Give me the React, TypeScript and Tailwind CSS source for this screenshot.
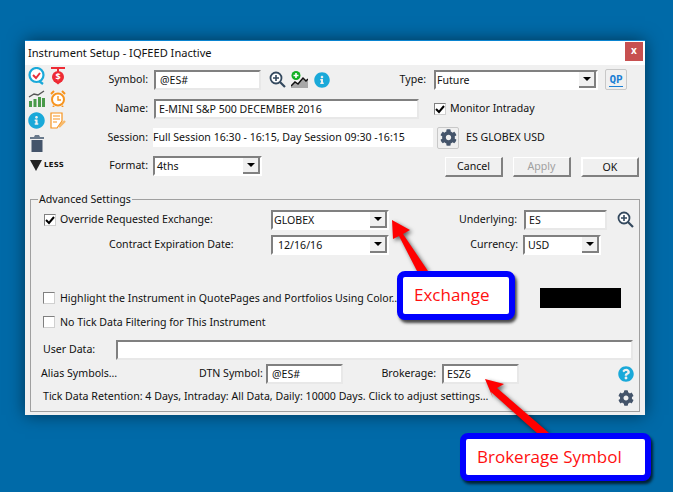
import React from "react";
import { FaCog, FaInfoCircle, FaQuestionCircle } from "react-icons/fa";

const Field = ({ className, text }: { className: string; text?: string }) => (
  <div
    className={`h-[20px] shrink-0 bg-white border-2 border-t-[#808080] border-l-[#808080] border-r-[#e8e8e8] border-b-[#e8e8e8] leading-[17px] ${className}`}
  >
    {text}
  </div>
);

const Select = ({ className, text, textClass = "pl-[2px]" }: { className: string; text: string; textClass?: string }) => (
  <div
    className={`h-[20px] shrink-0 flex bg-white border-2 border-t-[#808080] border-l-[#808080] border-r-white border-b-white ${className}`}
  >
    <span className={`flex-1 leading-[17px] ${textClass}`}>{text}</span>
    <span className="w-[17px] flex items-center justify-center bg-[#f0f0f0] border-r-2 border-b-2 border-[#808080]">
      <span className="w-0 h-0 border-l-[4px] border-r-[4px] border-t-[4px] border-l-transparent border-r-transparent border-t-black" />
    </span>
  </div>
);

const Check = ({ on = false }: { on?: boolean }) => (
  <span className="w-[12px] h-[12px] shrink-0 bg-white border border-t-[#808080] border-l-[#808080] border-r-[#d0d0d0] border-b-[#d0d0d0] flex items-center justify-center">
    {on && (
      <svg width="10" height="10" viewBox="0 0 10 10">
        <path d="M1 5 L4 8 L9 2" fill="none" stroke="#000" strokeWidth="2" />
      </svg>
    )}
  </span>
);

const Btn = ({ text, className = "" }: { text: string; className?: string }) => (
  <div
    className={`w-[58px] h-[20px] shrink-0 text-center leading-[17px] bg-[#f0f0f0] border border-t-white border-l-white border-r-2 border-b-2 border-r-[#808080] border-b-[#808080] ${className}`}
  >
    {text}
  </div>
);

const Magnifier = ({ className = "" }: { className?: string }) => (
  <svg width="17" height="17" viewBox="0 0 17 17" className={`shrink-0 ${className}`}>
    <circle cx="7" cy="7" r="5.5" fill="#fff" stroke="#34495e" strokeWidth="1.8" />
    <path d="M11 11 L16 16" stroke="#34495e" strokeWidth="2.2" />
    <path d="M4 7 H10 M7 4 V10" stroke="#34495e" strokeWidth="1.6" />
  </svg>
);

const SideIcons = () => (
  <div className="w-[68px] shrink-0 pl-[3px] pt-[2px]">
    <div className="grid grid-cols-[22px_16px] auto-rows-[22.5px]">
      <svg width="17" height="18" viewBox="0 0 17 18">
        <circle cx="8.5" cy="8" r="7" fill="#fff" stroke="#1aa9d9" strokeWidth="2.2" />
        <path d="M5 8 L8 11 L12 6" fill="none" stroke="#e8303a" strokeWidth="2" />
        <path d="M11 14 L15 17" stroke="#1aa9d9" strokeWidth="2.2" />
      </svg>
      <svg width="16" height="18" viewBox="0 0 16 18">
        <path d="M1 1 H15 M8 1 V5" stroke="#ee2b35" strokeWidth="2" />
        <circle cx="8" cy="10" r="6" fill="#ee2b35" />
        <path d="M8 17.5 L5 15 H11 Z" fill="#ee2b35" />
        <text x="8" y="13" fontSize="9" fontWeight="700" fill="#fff" textAnchor="middle">$</text>
      </svg>
      <svg width="17" height="17" viewBox="0 0 17 17">
        <path d="M1 7 L6 4 L10 5 L16 1" fill="none" stroke="#555" strokeWidth="1.4" />
        <path d="M1 11 h3 v6 h-3z M5.500 9 h3 v8 h-3z M10 7 h3 v10 h-3z M14 8 h3 v9 h-3z" fill="#4a9a4a" />
      </svg>
      <svg width="16" height="17" viewBox="0 0 16 17">
        <circle cx="8" cy="9.500" r="6" fill="#fff" stroke="#f7941e" strokeWidth="2" />
        <path d="M8 6 V10 H11" fill="none" stroke="#f7941e" strokeWidth="1.4" />
        <path d="M1 4 L4 1 M15 4 L12 1 M4 16 L3 17 M12 16 L13 17" stroke="#f7941e" strokeWidth="2" />
      </svg>
      <FaInfoCircle size={17} color="#1aa9d9" />
      <svg width="16" height="17" viewBox="0 0 16 17">
        <path d="M1 1 H12 V9 L7 16 H1 Z" fill="#fff" stroke="#f7941e" strokeWidth="1.2" />
        <path d="M3 4 H10 M3 7 H10 M3 10 H7" stroke="#f7941e" strokeWidth="1.2" />
        <path d="M9 15 L15 9" stroke="#f7b96a" strokeWidth="2.4" />
      </svg>
    </div>
    <svg width="14" height="18" viewBox="0 0 14 18" className="ml-[2px] -mt-[1px]">
      <path d="M0 3 H14 V5 H0 Z M4 3 L5 1 H9 L10 3 Z" fill="#6a7a8c" />
      <path d="M1.500 6 H12.500 V18 H1.500 Z" fill="#44546a" />
    </svg>
    <div className="flex items-center ml-[2px] mt-[8px] h-[12px]">
      <span className="w-0 h-0 border-l-[6px] border-r-[6px] border-t-[11px] border-l-transparent border-r-transparent border-t-[#222]" />
      <span className="ml-[2px] text-[7px] font-bold leading-none tracking-[0.3px] font-['DejaVu_Sans',sans-serif]">LESS</span>
    </div>
  </div>
);

export default function App() {
  return (
    <div className="relative w-[673px] h-[492px] overflow-hidden bg-[#006aa8] pt-[40px] pl-[25px] text-[10.6px] text-[#111] font-['Noto_Sans',sans-serif] whitespace-nowrap">
      {/* Dialog */}
      <div className="w-[620px] h-[375px] flex flex-col bg-[#f0f0f0] border-t border-[#0a84d0] shadow-[0_0_16px_rgba(0,0,0,0.5)]">
        <div className="h-[24px] shrink-0 flex bg-white pl-[3px] leading-[23px] text-[11.1px]">
          <span className="flex-1">Instrument Setup - IQFEED Inactive</span>
          <span className="w-[18px] h-[19px] mt-[1px] mr-[2px] bg-[#c75050] text-white text-center font-bold text-[10px] leading-[17px]">x</span>
        </div>

        <div className="h-[134px] shrink-0 flex">
          <SideIcons />
          <div className="flex-1 flex flex-col">
            <div className="h-[29px] flex items-center">
              <span className="w-[55px] text-right">Symbol:</span>
              <Field className="ml-[6px] w-[107px] pl-[4px]" text="@ES#" />
              <Magnifier className="ml-[8px]" />
              <svg width="17" height="17" viewBox="0 0 17 17" className="ml-[5px] shrink-0">
                <path d="M0 15 L4 11 L7 13 L12 7 L15 10 L17 8 V17 H0 Z" fill="#a8a8a8" />
                <path d="M0 15 L4 11 L7 13 L12 7 L15 10 L17 8" fill="none" stroke="#111" strokeWidth="1.5" />
                <circle cx="5" cy="4.500" r="4.500" fill="#12b023" />
                <path d="M2.500 4.500 H7.500 M5 2 V7" stroke="#fff" strokeWidth="1.6" />
              </svg>
              <FaInfoCircle size={16} color="#1aa9d9" className="ml-[6px] shrink-0" />
              <span className="w-[96px] text-right">Type:</span>
              <Select className="ml-[8px] w-[164px]" text="Future" textClass="pl-[1px]" />
              <div className="ml-[7px] w-[22px] h-[21px] shrink-0 border border-[#c8c8c8] rounded-[2px] text-center text-[11px] font-bold text-[#1a7fd4] leading-[17px]">
                <span className="border-b border-[#1a7fd4] font-['DejaVu_Sans_Mono',monospace]">QP</span>
              </div>
            </div>
            <div className="h-[29px] flex items-center">
              <span className="w-[55px] text-right">Name:</span>
              <Field className="ml-[6px] w-[265px] pl-[3px]" text="E-MINI S&P 500 DECEMBER 2016" />
              <span className="ml-[15px]"><Check on /></span>
              <span className="ml-[4px]">Monitor Intraday</span>
            </div>
            <div className="h-[29px] flex items-center">
              <span className="w-[55px] text-right">Session:</span>
              <div className="ml-[5px] w-[280px] h-[19px] bg-white leading-[18px]">Full Session 16:30 - 16:15, Day Session 09:30 -16:15</div>
              <div className="ml-[4px] w-[22px] h-[22px] flex items-center justify-center border border-[#c8c8c8] rounded-[2px]">
                <FaCog size={17} color="#44546a" />
              </div>
              <span className="ml-[7px]">ES GLOBEX USD</span>
            </div>
            <div className="h-[28px] flex items-center">
              <span className="w-[55px] text-right">Format:</span>
              <Select className="ml-[5px] w-[109px]" text="4ths" />
              <div className="ml-[183px] flex gap-[10px] mt-[2px]">
                <Btn text="Cancel" />
                <Btn text="Apply" className="text-[#a0a0a0]" />
                <Btn text="OK" className="border-2 border-[#707070]" />
              </div>
            </div>
          </div>
        </div>

        {/* Advanced Settings */}
        <fieldset className="mx-[5px] mb-[3px] -mt-[8px] flex-1 border border-[#a0a0a0]">
          <legend className="ml-[7px] h-[16px] leading-[16px] px-px">Advanced Settings</legend>
          <div className="h-[25px] flex items-center">
            <span className="ml-[13px]"><Check on /></span>
            <span className="ml-[4px] w-[211px]">Override Requested Exchange:</span>
            <Select className="w-[118px]" text="GLOBEX" textClass="pl-[1px]" />
            <span className="w-[128px] text-right">Underlying:</span>
            <Field className="ml-[7px] w-[83px] pl-[3px]" text="ES" />
            <Magnifier className="ml-[10px]" />
          </div>
          <div className="h-[26px] flex items-center">
            <span className="w-[240px] pl-[78px]">Contract Expiration Date:</span>
            <Select className="w-[118px]" text="12/16/16" textClass="pl-[5px]" />
            <span className="w-[129px] text-right">Currency:</span>
            <Select className="ml-[5px] w-[78px]" text="USD" textClass="pl-[3px]" />
          </div>
          <div className="h-[20px] mt-[30px] flex items-center">
            <span className="ml-[12px]"><Check /></span>
            <span className="ml-[5px] w-[480px] mt-[1px]">Highlight the Instrument in QuotePages and Portfolios Using Color…</span>
            <div className="w-[81px] h-[20px] bg-black" />
          </div>
          <div className="h-[20px] mt-[4px] flex items-center">
            <span className="ml-[12px]"><Check /></span>
            <span className="ml-[5px] mt-[1px]">No Tick Data Filtering for This Instrument</span>
          </div>
          <div className="h-[20px] mt-[8px] flex items-center">
            <span className="ml-[12px] w-[73px] -mt-[1px]">User Data:</span>
            <Field className="w-[517px]" />
          </div>
          <div className="h-[20px] mt-[4px] flex items-center">
            <span className="ml-[10px] w-[158px]">Alias Symbols…</span>
            <span className="w-[67px]">DTN Symbol:</span>
            <Field className="w-[77px] pl-[4px]" text="@ES#" />
            <span className="w-[93px] text-right">Brokerage:</span>
            <Field className="ml-[6px] w-[77px] pl-[3px]" text="ESZ6" />
            <FaQuestionCircle size={16} color="#1aa9d9" className="ml-[99px] shrink-0" />
          </div>
          <div className="h-[20px] mt-[4px] flex items-center">
            <span className="ml-[12px] w-[575px] -mt-[3px]">Tick Data Retention: 4 Days, Intraday: All Data, Daily: 10000 Days. Click to adjust settings…</span>
            <FaCog size={16} color="#44546a" className="shrink-0" />
          </div>
        </fieldset>
      </div>

      {/* Annotations */}
      <svg width="673" height="492" viewBox="0 0 673 492" className="absolute left-0 top-0 drop-shadow-[2px_2px_2px_rgba(0,0,0,0.6)]">
        <polygon points="392,220 410,230 403,234 428,271 417,271 399,236 393,239" fill="#ff0000" />
        <polygon points="485,379 504,384 497,388 549,433 537,433 491,392 493,398" fill="#ff0000" />
      </svg>
      <div className="absolute left-[397px] top-[271px] w-[118px] h-[49px] bg-white border-[6px] border-[#0000ff] rounded-[8px] shadow-[2px_3px_3px_rgba(0,0,0,0.7)] pl-[11px] text-[17px] leading-[35px] text-[#ff1010] font-['Open_Sans',sans-serif]">
        Exchange
      </div>
      <div className="absolute left-[460px] top-[433px] w-[191px] h-[48px] bg-white border-[6px] border-[#0000ff] rounded-[8px] shadow-[2px_3px_3px_rgba(0,0,0,0.7)] pl-[11px] text-[17px] leading-[35px] text-[#ff1010] font-['Open_Sans',sans-serif]">
        Brokerage Symbol
      </div>
    </div>
  );
}
